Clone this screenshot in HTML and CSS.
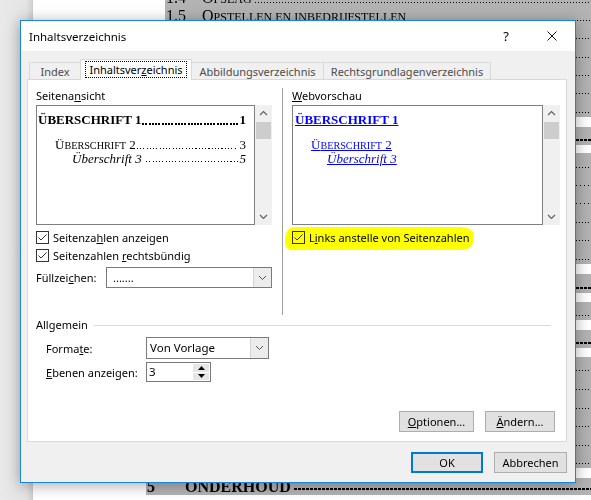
FILE: index.html
```html
<!DOCTYPE html>
<html lang="de">
<head>
<meta charset="utf-8">
<title>Inhaltsverzeichnis</title>
<link rel="stylesheet" href="styles.css">
</head>
<body>
<div class="desk">
  <div class="gutter"></div>
  <div class="page">
    <div class="doc">
      <div class="ln h18"><span class="num">1.4</span><span class="ttl">O<small>PSLAG</small></span><span class="lead"></span></div>
      <div class="ln h18"><span class="num">1.5</span><span class="ttl">O<small>PSTELLEN EN INBEDRIJFSTELLEN</small></span><span class="lead"></span></div>
      <div class="ln h18"><span class="lead"></span></div>
      <div class="ln h19"><span class="lead"></span></div>
      <div class="ln h18"><span class="lead"></span></div>
      <div class="ln h18"><span class="lead"></span></div>
      <div class="ln h19"><span class="lead"></span></div>
      <div class="gap g10"></div>
      <div class="ln h18 bold"><span class="lead"></span></div>
      <div class="gap g8"></div>
      <div class="ln h19"><span class="lead"></span></div>
      <div class="ln h18 sparse"><span class="lead"></span></div>
      <div class="ln h18 sparse"><span class="lead"></span></div>
      <div class="ln h19"><span class="lead"></span></div>
      <div class="ln h18"><span class="lead"></span></div>
      <div class="ln h19"><span class="lead"></span></div>
      <div class="gap g10"></div>
      <div class="ln h19 bold"><span class="lead"></span></div>
      <div class="gap g9"></div>
      <div class="ln h18"><span class="lead"></span></div>
      <div class="gap g10"></div>
      <div class="ln h18 bold"><span class="lead"></span></div>
      <div class="gap g9"></div>
      <div class="ln h18"><span class="lead"></span></div>
      <div class="ln h19"><span class="lead"></span></div>
      <div class="ln h19"><span class="lead"></span></div>
      <div class="ln h18"><span class="lead"></span></div>
      <div class="ln h19"><span class="lead"></span></div>
      <div class="ln h18"><span class="lead"></span></div>
      <div class="gap g10"></div>
      <div class="ln h17 bold chapter"><span class="num">5</span><span class="ttl">ONDERHOUD</span><span class="lead"></span></div>
    </div>
  </div>
</div>

<div class="dialog">
  <div class="titlebar">
    <span class="title">Inhaltsverzeichnis</span>
    <span class="tbtn">?</span>
    <span class="tbtn"><svg width="10" height="10" viewBox="0 0 10 10"><path d="M0.5 0.5L9.5 9.5M9.5 0.5L0.5 9.5" stroke="#111" stroke-width="1" fill="none"/></svg></span>
  </div>
  <div class="dbody">
    <div class="tabs">
      <div class="tab t-index">Index</div>
      <div class="tab t-inh sel"><span class="focus">Inhaltsver<u>z</u>eichnis</span></div>
      <div class="tab t-abb">Abbildungsverzeichnis</div>
      <div class="tab t-rgv">Rechtsgrundlagenverzeichnis</div>
    </div>
    <div class="panel">
      <div class="top">
        <div class="col left">
          <div class="lbl">Seitena<u>n</u>sicht</div>
          <div class="pv">
            <div class="pvbox print">
              <div class="e1"><span>ÜBERSCHRIFT 1</span><span class="dots"></span><span class="n">1</span></div>
              <div class="e2"><span>Ü<small>BERSCHRIFT</small> 2</span><span class="dots"></span><span class="n">3</span></div>
              <div class="e3"><span>Überschrift 3</span><span class="dots"></span><span class="n">5</span></div>
            </div>
            <div class="sb">
              <svg class="arr" width="17" height="17" viewBox="0 0 17 17"><path d="M5 10L8.5 6.5L12 10" stroke="#606060" stroke-width="1.2" fill="none"/></svg>
              <div class="thumb"></div>
              <div class="track"></div>
              <svg class="arr" width="17" height="17" viewBox="0 0 17 17"><path d="M5 7L8.5 10.5L12 7" stroke="#606060" stroke-width="1.2" fill="none"/></svg>
            </div>
          </div>
          <div class="chk first"><span class="box"><svg width="11" height="11" viewBox="0 0 11 11"><path d="M1.5 5.5L4 8L9.5 2.5" stroke="#333" stroke-width="1" fill="none"/></svg></span><span>Seitenza<u>h</u>len anzeigen</span></div>
          <div class="chk"><span class="box"><svg width="11" height="11" viewBox="0 0 11 11"><path d="M1.5 5.5L4 8L9.5 2.5" stroke="#333" stroke-width="1" fill="none"/></svg></span><span>Seitenzahlen <u>r</u>echtsbündig</span></div>
          <div class="fill">
            <span class="flbl">Füllzei<u>c</u>hen:</span>
            <div class="combo wide"><span class="cval">.......</span><span class="dd"><svg width="9" height="6" viewBox="0 0 9 6"><path d="M1 1L4.5 4.5L8 1" stroke="#555" stroke-width="1" fill="none"/></svg></span></div>
          </div>
        </div>
        <div class="vdiv"></div>
        <div class="col right">
          <div class="lbl"><u>W</u>ebvorschau</div>
          <div class="pv">
            <div class="pvbox web">
              <div class="e1"><a>ÜBERSCHRIFT 1</a></div>
              <div class="e2"><a>Ü<small>BERSCHRIFT</small> 2</a></div>
              <div class="e3"><a>Überschrift 3</a></div>
            </div>
            <div class="sb">
              <svg class="arr" width="17" height="17" viewBox="0 0 17 17"><path d="M5 10L8.5 6.5L12 10" stroke="#606060" stroke-width="1.2" fill="none"/></svg>
              <div class="thumb"></div>
              <div class="track"></div>
              <svg class="arr" width="17" height="17" viewBox="0 0 17 17"><path d="M5 7L8.5 10.5L12 7" stroke="#606060" stroke-width="1.2" fill="none"/></svg>
            </div>
          </div>
          <div class="chk first marked"><span class="box"><svg width="11" height="11" viewBox="0 0 11 11"><path d="M1.5 5.5L4 8L9.5 2.5" stroke="#333" stroke-width="1" fill="none"/></svg></span><span>L<u>i</u>nks anstelle von Seitenzahlen</span><span class="marker"></span></div>
        </div>
      </div>
      <div class="group">
        <div class="ghead"><span>Allgemein</span><span class="gline"></span></div>
        <div class="frow"><span class="flabel">Forma<u>t</u>e:</span>
          <div class="combo fmt"><span class="cval">Von Vorlage</span><span class="dd"><svg width="9" height="6" viewBox="0 0 9 6"><path d="M1 1L4.5 4.5L8 1" stroke="#555" stroke-width="1" fill="none"/></svg></span></div>
        </div>
        <div class="frow"><span class="flabel"><u>E</u>benen anzeigen:</span>
          <div class="spin"><span class="sval">3</span><span class="sbtns"><span class="sup"><svg width="7" height="4" viewBox="0 0 7 4"><path d="M0 4L3.5 0L7 4Z" fill="#000"/></svg></span><span class="sdn"><svg width="7" height="4" viewBox="0 0 7 4"><path d="M0 0L3.5 4L7 0Z" fill="#000"/></svg></span></span></div>
        </div>
      </div>
      <div class="pbtns">
        <div class="btn b-opt"><u>O</u>ptionen...</div>
        <div class="btn b-chg"><u>Ä</u>ndern...</div>
      </div>
    </div>
    <div class="dbtns">
      <div class="btn b-ok">OK</div>
      <div class="btn b-cancel">Abbrechen</div>
    </div>
  </div>
</div>
</body>
</html>
```
FILE: styles.css
```css
* { box-sizing: border-box; }
html, body { margin: 0; padding: 0; }
body {
  width: 591px;
  height: 500px;
  overflow: hidden;
  position: relative;
  font-family: "Noto Sans", sans-serif;
  font-size: 11px;
  color: #000;
  background: #fff;
}
u { text-decoration: underline; text-underline-offset: 1px; }

/* background document */
.desk { display: flex; height: 500px; }
.gutter {
  width: 33px;
  background: linear-gradient(to right, #e9e9e9 0, #e4e4e4 26px, #d2d2d2 32px, #c8c8c8 33px);
}
.page { flex: 1; background: #fff; padding-left: 132px; overflow: hidden; }
.doc {
  margin-top: -11px;
  font-family: "Liberation Serif", serif;
  font-size: 16px;
  line-height: 18px;
}
.ln {
  display: flex;
  white-space: nowrap;
  background: #b3b3b3;
}
.h17 { height: 17px; }
.h18 { height: 18px; }
.h19 { height: 19px; }
.gap { background: #fff; }
.g8 { height: 8px; }
.g9 { height: 9px; }
.g10 { height: 10px; }
.ln .num { width: 37px; padding-left: 1px; }
.ln .ttl small { font-size: 12px; }
.ln .lead {
  flex: 1;
  align-self: flex-end;
  height: 1px;
  margin: 0 0 4px 3px;
  background: repeating-linear-gradient(to right, #000 0 1px, transparent 1px 3px);
}
.ln.bold .lead {
  height: 2px;
  background: repeating-linear-gradient(to right, #000 0 3px, transparent 3px 4px);
}
.ln.sparse .lead {
  background: repeating-linear-gradient(to right, #000 0 1px, transparent 1px 4px);
}
.chapter { margin-left: -19px; font-weight: bold; }
.chapter .num { width: 39px; }
.chapter .lead { margin-bottom: 5px; }

/* dialog */
.dialog {
  position: absolute;
  left: 20px;
  top: 20px;
  width: 556px;
  height: 463px;
  border: 1px solid #1a84d6;
  background: #f0f0f0;
  box-shadow: 0 2px 14px rgba(0, 0, 0, 0.35);
  display: flex;
  flex-direction: column;
}
.titlebar {
  height: 30px;
  background: #fff;
  display: flex;
  align-items: center;
  padding-left: 8px;
  flex: none;
}
.title { flex: 1; font-size: 11.5px; }
.tbtn {
  width: 46px;
  height: 30px;
  display: flex;
  align-items: center;
  justify-content: center;
  font-size: 13px;
}
.dbody {
  flex: 1;
  display: flex;
  flex-direction: column;
  padding: 8px 8px 9px 6px;
}

/* tabs */
.tabs {
  display: flex;
  align-items: flex-end;
  height: 21px;
  margin-left: 2px;
  margin-bottom: -1px;
  position: relative;
  z-index: 1;
}
.tab {
  height: 17px;
  margin-bottom: 1px;
  border: 1px solid #d9d9d9;
  border-bottom: none;
  background: #f0f0f0;
  color: #4d4d4d;
  display: flex;
  align-items: center;
  justify-content: center;
  white-space: nowrap;
}
.t-index { width: 51px; border-right: none; }
.t-inh { width: 112px; }
.t-abb { width: 131px; border-left: none; border-right: none; }
.t-rgv { width: 168px; }
.tab.sel {
  height: 21px;
  margin-bottom: 0;
  background: #fff;
  color: #000;
  align-items: flex-start;
  padding-top: 2px;
}
.focus {
  outline: 1px dotted #000;
  outline-offset: 0;
  padding: 0 3px;
  line-height: 15px;
}

/* panel */
.panel {
  height: 363px;
  background: #fff;
  border: 1px solid #d9d9d9;
  padding: 8px 6px 9px 8px;
  display: flex;
  flex-direction: column;
}
.top { display: flex; height: 227px; }
.col { display: flex; flex-direction: column; }
.col.left { width: 236px; }
.col.right { width: 268px; }
.vdiv { width: 1px; background: #a0a0a0; margin: 0 9px 0 10px; }
.lbl { line-height: 15px; height: 15px; margin-bottom: 2px; }

.pv { display: flex; height: 120px; }
.pvbox {
  flex: 1;
  border: 1px solid #7f7f7f;
  background: #fff;
  font-family: "Liberation Serif", serif;
  font-size: 13px;
  padding: 5px 8px 0 1px;
  overflow: hidden;
}
.pvbox .e1, .pvbox .e2, .pvbox .e3 { display: flex; white-space: nowrap; }
.pvbox .e1 { line-height: 18px; font-weight: bold; }
.pvbox .e2 { line-height: 13px; margin-top: 9px; padding-left: 17px; }
.pvbox .e2 small { font-size: 10.2px; }
.pvbox .e3 { line-height: 13px; padding-left: 34px; font-style: italic; }
.print .dots {
  flex: 1;
  align-self: flex-end;
  height: 1px;
  margin: 0 2px 3px 1px;
  background: repeating-linear-gradient(to right, #000 0 1px, transparent 1px 3.25px);
}
.print .e1 .dots {
  height: 2px;
  margin-bottom: 4px;
  background: repeating-linear-gradient(to right, #000 0 2px, transparent 2px 3.25px);
}
.print .e3 .dots { margin-left: 4px; }
.web { padding-left: 2px; }
.web a { color: #0000ff; text-decoration: underline; text-decoration-thickness: 1px; }
.web .e2 { padding-left: 16px; }
.web .e3 { padding-left: 32px; }

.sb {
  width: 17px;
  background: #f0f0f0;
  display: flex;
  flex-direction: column;
}
.sb .arr { display: block; flex: none; }
.sb .thumb { height: 17px; margin: 0 1px; background: #cdcdcd; flex: none; }
.sb .track { flex: 1; }

.chk {
  display: flex;
  align-items: center;
  height: 18px;
  position: relative;
  white-space: nowrap;
}
.chk.first { margin-top: 3px; }
.chk .box {
  width: 13px;
  height: 13px;
  border: 1px solid #333;
  background: #fff;
  margin-right: 4px;
  display: flex;
  align-items: center;
  justify-content: center;
}
.marker {
  position: absolute;
  left: -7px;
  top: -1px;
  width: 189px;
  height: 23px;
  background: #ffff00;
  mix-blend-mode: multiply;
  border-radius: 9px 14px 11px 5px / 12px 8px 12px 9px;
}

.fill { display: flex; align-items: center; margin-top: 3px; height: 21px; }
.flbl { width: 70px; }
.combo {
  display: flex;
  align-items: stretch;
  height: 21px;
  border: 1px solid #7a7a7a;
  background: #fff;
}
.combo.wide { width: 166px; }
.combo .cval { flex: 1; padding-left: 6px; line-height: 19px; }
.combo .dd {
  width: 18px;
  background: #ececec;
  border-left: 1px solid #d4d4d4;
  display: flex;
  align-items: center;
  justify-content: center;
}

/* group */
.group { display: flex; flex-direction: column; }
.ghead { display: flex; align-items: center; height: 15px; margin-top: 2px; }
.gline { flex: 1; height: 1px; background: #dcdcdc; margin: 1px 9px 0 6px; }
.frow { display: flex; align-items: center; padding-left: 10px; }
.frow:nth-child(2) { margin-top: 5px; height: 22px; }
.frow:nth-child(3) { margin-top: 3px; height: 20px; }
.flabel { width: 100px; }
.combo.fmt { width: 123px; height: 22px; }
.combo.fmt .cval { padding-left: 3px; line-height: 20px; font-size: 11.5px; }
.spin {
  display: flex;
  width: 65px;
  height: 20px;
  border: 1px solid #7a7a7a;
  background: #fff;
}
.sval { flex: 1; padding-left: 2px; line-height: 18px; font-size: 11.5px; }
.sbtns { width: 18px; display: flex; flex-direction: column; padding: 1px; gap: 1px; }
.sbtns span {
  flex: 1;
  background: #e6e6e6;
  display: flex;
  align-items: center;
  justify-content: center;
}

/* buttons */
.pbtns { margin-top: auto; display: flex; justify-content: flex-end; gap: 11px; padding-right: 5px; }
.btn {
  height: 21px;
  background: #e1e1e1;
  border: 1px solid #adadad;
  display: flex;
  align-items: center;
  justify-content: center;
  white-space: nowrap;
}
.b-opt { width: 75px; }
.b-chg { width: 70px; }
.dbtns { display: flex; justify-content: flex-end; gap: 11px; margin-top: 10px; }
.b-ok { width: 72px; border: 2px solid #0078d7; }
.b-cancel { width: 73px; }
```
